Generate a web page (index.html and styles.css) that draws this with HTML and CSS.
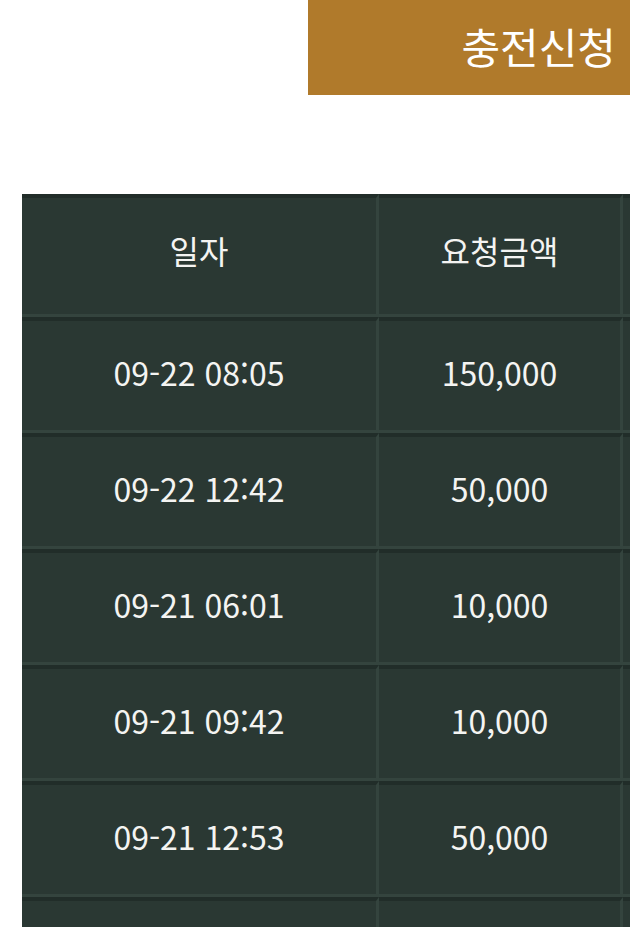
FILE: index.html
```
<!DOCTYPE html>
<html lang="ko">
<head>
    <meta charset="UTF-8">
    <meta name="viewport" content="width=device-width, initial-scale=1.0">
    <title>충전신청</title>
    <link rel="stylesheet" href="styles.css">
</head>
<body>
    <div class="page">
        <div class="top-bar">
            <div class="charge-button">충전신청</div>
        </div>

        <div class="history">
            <table class="history-table">
                <colgroup>
                    <col class="col-date">
                    <col class="col-amount">
                    <col>
                </colgroup>
                <thead>
                    <tr>
                        <th>일자</th>
                        <th>요청금액</th>
                        <th>상태</th>
                    </tr>
                </thead>
                <tbody>
                    <tr>
                        <td>09-22 08:05</td>
                        <td>150,000</td>
                        <td>완료</td>
                    </tr>
                    <tr>
                        <td>09-22 12:42</td>
                        <td>50,000</td>
                        <td>완료</td>
                    </tr>
                    <tr>
                        <td>09-21 06:01</td>
                        <td>10,000</td>
                        <td>완료</td>
                    </tr>
                    <tr>
                        <td>09-21 09:42</td>
                        <td>10,000</td>
                        <td>완료</td>
                    </tr>
                    <tr>
                        <td>09-21 12:53</td>
                        <td>50,000</td>
                        <td>완료</td>
                    </tr>
                    <tr>
                        <td>09-21 15:20</td>
                        <td>30,000</td>
                        <td>완료</td>
                    </tr>
                </tbody>
            </table>
        </div>
    </div>
</body>
</html>
```

FILE: styles.css
```
:root {
    --gold: #b07a2b;
    --cell-bg: #2a3833;
    --cell-dark: #212d29;
    --cell-light: #34443e;
    --text-color: #f4f4f2;
}

body {
    margin: 0;
    font-family: "Noto Sans CJK KR", "Noto Sans", sans-serif;
    background: #ffffff;
}

.page {
    width: 630px;
    height: 927px;
    overflow: hidden;
}

.top-bar {
    display: flex;
    justify-content: flex-end;
}

.charge-button {
    width: 322px;
    height: 95px;
    box-sizing: border-box;
    padding-right: 14px;
    background-color: var(--gold);
    color: #ffffff;
    font-size: 42px;
    line-height: 92px;
    text-align: right;
}

.history {
    margin-top: 99px;
    padding-left: 22px;
}

.history-table {
    border-collapse: separate;
    border-spacing: 0;
    width: 800px;
    table-layout: fixed;
    color: var(--text-color);
    font-size: 32px;
}

.col-date {
    width: 357px;
}

.col-amount {
    width: 244px;
}

.history-table th,
.history-table td {
    box-sizing: border-box;
    background-color: var(--cell-bg);
    border-top: 4px solid var(--cell-dark);
    border-bottom: 3px solid var(--cell-light);
    border-right: 3px solid var(--cell-light);
    text-align: center;
    font-weight: normal;
    padding: 0;
}

.history-table th {
    height: 123px;
    line-height: 105px;
    padding-bottom: 11px;
}

.history-table td {
    height: 116px;
    line-height: 103px;
    padding-bottom: 6px;
}
```
